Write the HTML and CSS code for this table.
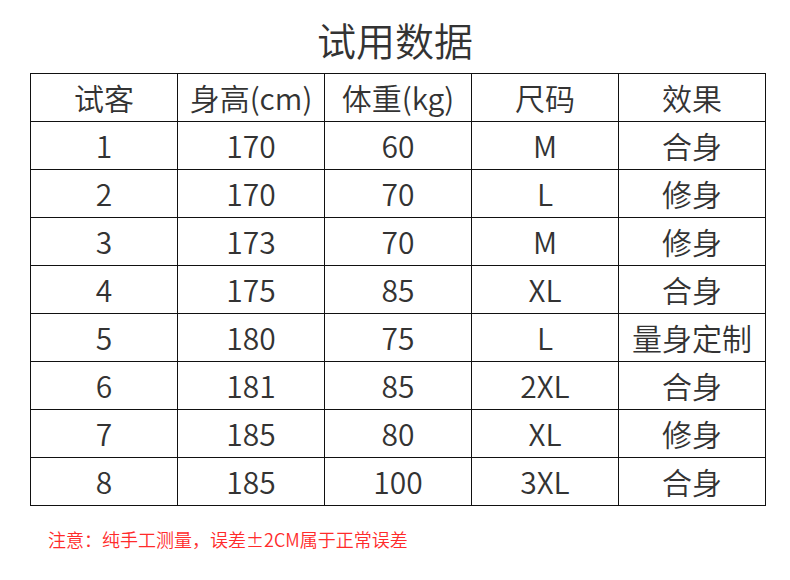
FILE: index.html
```html
<!DOCTYPE html>
<html lang="zh-CN">
<head>
<meta charset="utf-8">
<title>试用数据</title>
<link rel="stylesheet" href="styles.css">
</head>
<body>
<div class="page">
  <h1 class="title">试用数据</h1>
  <table class="data">
    <colgroup>
      <col class="c1"><col class="c2"><col class="c3"><col class="c4"><col class="c5">
    </colgroup>
    <thead>
      <tr><th>试客</th><th>身高(cm)</th><th>体重(kg)</th><th>尺码</th><th>效果</th></tr>
    </thead>
    <tbody>
      <tr><td>1</td><td>170</td><td>60</td><td>M</td><td>合身</td></tr>
      <tr><td>2</td><td>170</td><td>70</td><td>L</td><td>修身</td></tr>
      <tr><td>3</td><td>173</td><td>70</td><td>M</td><td>修身</td></tr>
      <tr><td>4</td><td>175</td><td>85</td><td>XL</td><td>合身</td></tr>
      <tr><td>5</td><td>180</td><td>75</td><td>L</td><td>量身定制</td></tr>
      <tr><td>6</td><td>181</td><td>85</td><td>2XL</td><td>合身</td></tr>
      <tr><td>7</td><td>185</td><td>80</td><td>XL</td><td>修身</td></tr>
      <tr><td>8</td><td>185</td><td>100</td><td>3XL</td><td>合身</td></tr>
    </tbody>
  </table>
  <p class="note">注意：纯手工测量，误差±2CM属于正常误差</p>
</div>
</body>
</html>
```
FILE: styles.css
```css
html, body {
  margin: 0;
  padding: 0;
  background: #fff;
}
body {
  font-family: "Noto Sans CJK SC", "Noto Sans", sans-serif;
  color: #333;
}
.page {
  width: 790px;
  height: 580px;
  padding-top: 20px;
  box-sizing: border-box;
}
.title {
  margin: 0;
  font-size: 39px;
  font-weight: 350;
  line-height: 38px;
  text-align: center;
  color: #333;
}
.data {
  margin: 15px 0 0 30px;
  border-collapse: collapse;
  table-layout: fixed;
  width: 735px;
}
.c1 { width: 147px; }
.c2 { width: 147px; }
.c3 { width: 147px; }
.c4 { width: 147px; }
.c5 { width: 147px; }
.data th, .data td {
  border: 1px solid #111;
  height: 45px;
  padding: 0 0 2px;
  font-size: 30px;
  font-weight: 350;
  line-height: 30px;
  text-align: center;
  vertical-align: middle;
  color: #333;
}
.note {
  margin: 24px 0 0 48px;
  font-size: 18px;
  font-weight: 350;
  line-height: 18px;
  color: #ff2b2b;
}
```
